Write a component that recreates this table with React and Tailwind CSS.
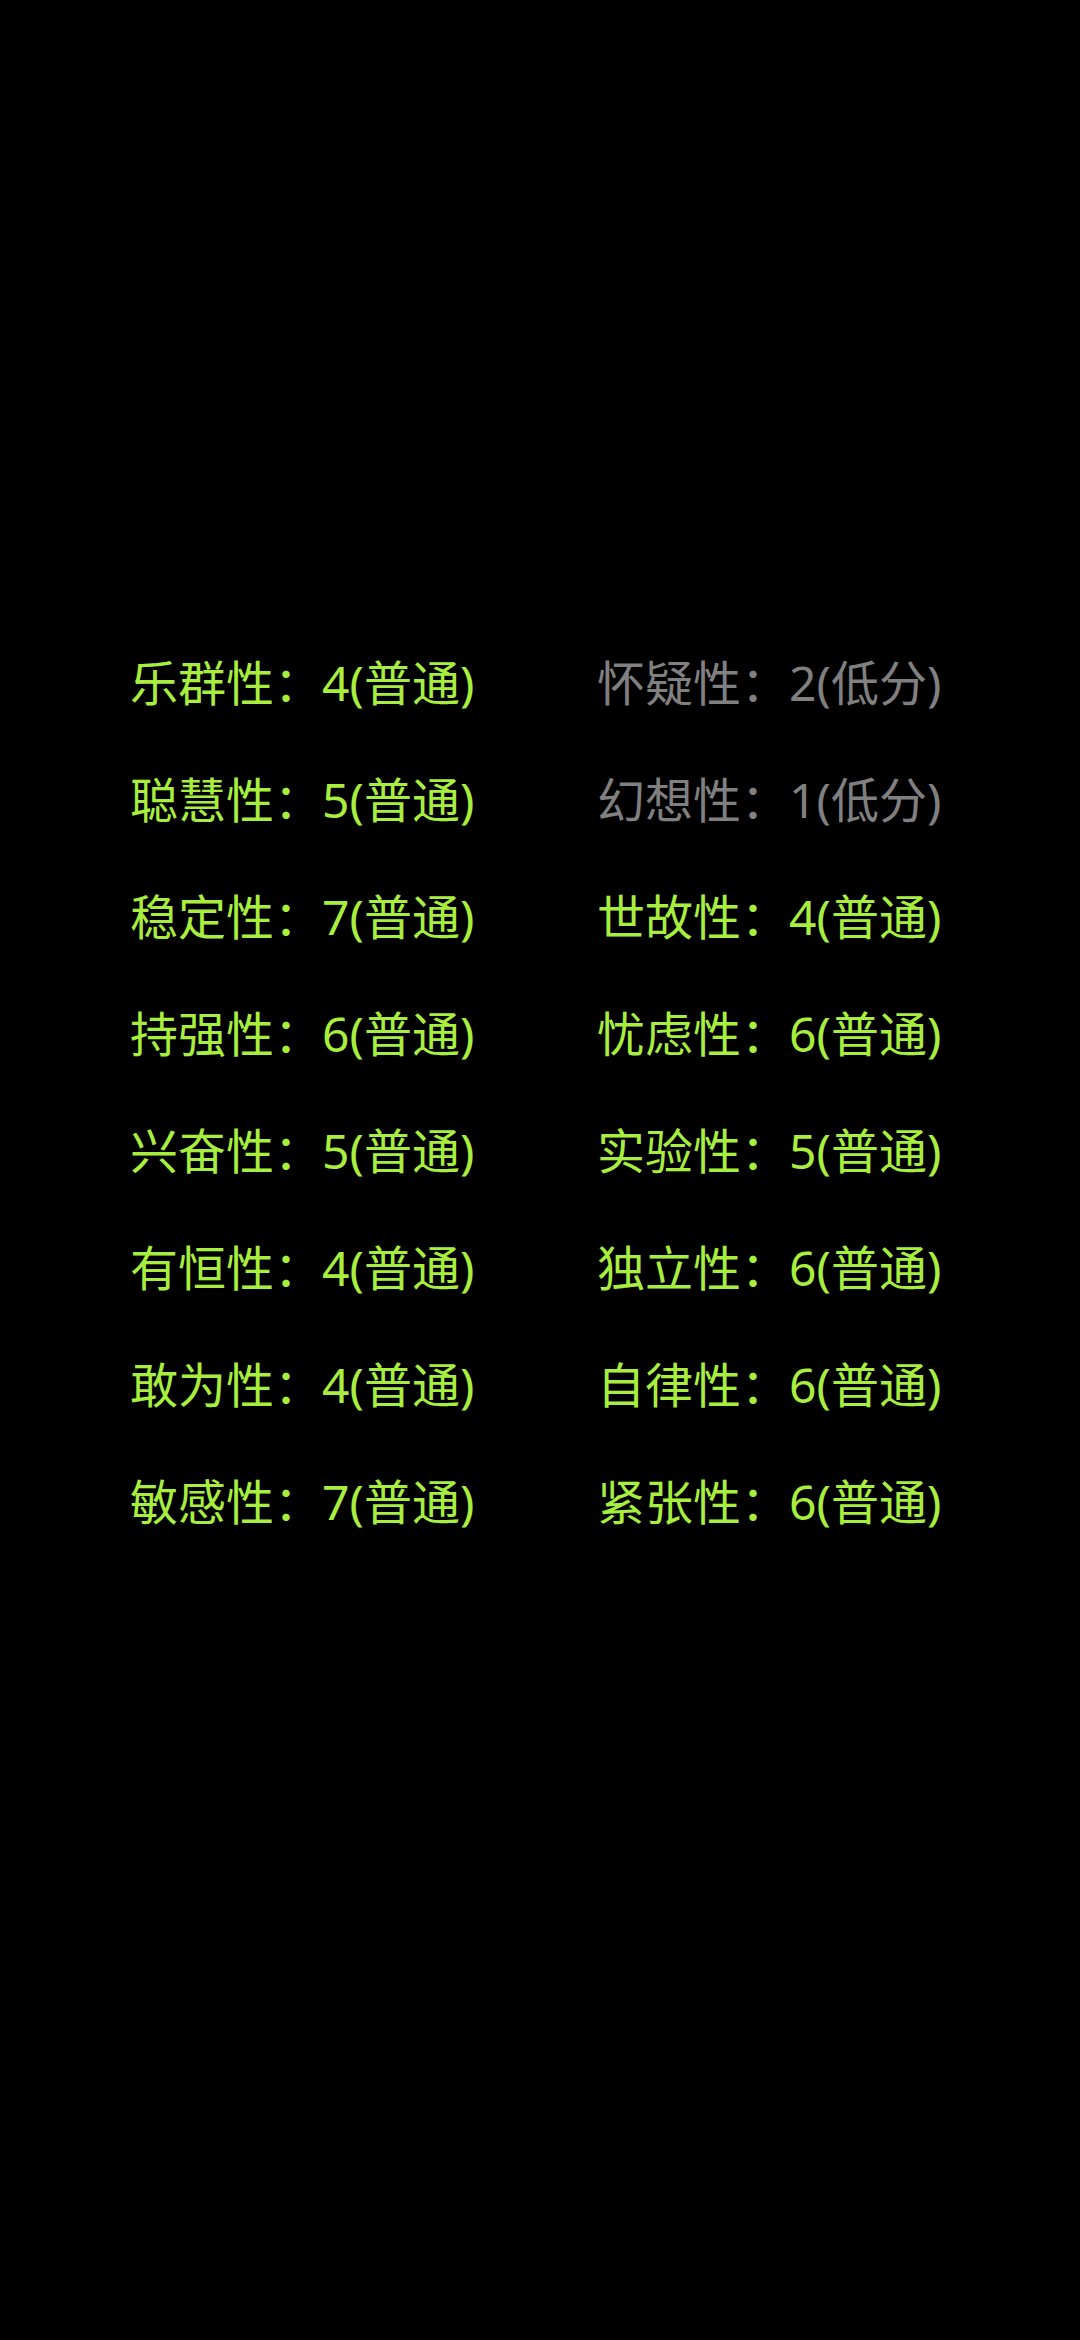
import React from 'react';

const rows = [
  [['乐群性', '4(普通)', true], ['怀疑性', '2(低分)', false]],
  [['聪慧性', '5(普通)', true], ['幻想性', '1(低分)', false]],
  [['稳定性', '7(普通)', true], ['世故性', '4(普通)', true]],
  [['持强性', '6(普通)', true], ['忧虑性', '6(普通)', true]],
  [['兴奋性', '5(普通)', true], ['实验性', '5(普通)', true]],
  [['有恒性', '4(普通)', true], ['独立性', '6(普通)', true]],
  [['敢为性', '4(普通)', true], ['自律性', '6(普通)', true]],
  [['敏感性', '7(普通)', true], ['紧张性', '6(普通)', true]],
];

const Item = ({ label, value, normal }) => (
  <div className={`h-[117px] leading-[117px] whitespace-nowrap ${normal ? 'text-[#a8ee3e]' : 'text-[#808080]'}`}>
    {label}：{value}
  </div>
);

export default function App() {
  return (
    <div
      className="min-h-[2340px] w-[1080px] bg-black pt-[624px] pl-[130px] text-[48px]"
      style={{ fontFamily: '"Noto Sans", "Noto Sans CJK SC", sans-serif' }}
    >
      <div className="grid grid-cols-[467px_1fr]">
        {rows.map((r, i) => (
          <React.Fragment key={i}>
            <Item label={r[0][0]} value={r[0][1]} normal={r[0][2]} />
            <Item label={r[1][0]} value={r[1][1]} normal={r[1][2]} />
          </React.Fragment>
        ))}
      </div>
    </div>
  );
}
